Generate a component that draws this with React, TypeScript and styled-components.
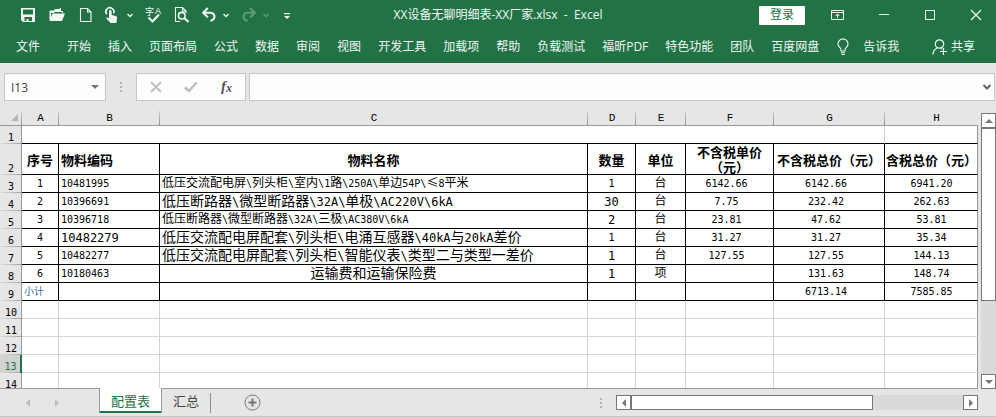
import React from "react";
import styled, { createGlobalStyle, css } from "styled-components";

const GREEN = "#217346";
const CHROME = "#e6e6e6";
const EDGE = "#999999";
const SANS = `"Noto Sans CJK SC", "Open Sans", sans-serif`;
const UI = `"Open Sans", "Noto Sans CJK SC", sans-serif`;
const MONO = `"DejaVu Sans Mono", "Noto Sans CJK SC", monospace`;

const GlobalStyle = createGlobalStyle`
  *, *::before, *::after { box-sizing: border-box; }
  html, body { margin: 0; padding: 0; }
  body { background: ${CHROME}; font-family: ${UI}; font-size: 12px; overflow: hidden; }
  button, input { font: inherit; color: inherit; margin: 0; padding: 0; border: 0; background: none; border-radius: 0; }
  button { cursor: pointer; }
  svg { display: block; overflow: visible; }
`;

const Window = styled.div`
  display: flex;
  flex-direction: column;
  height: 100vh;
  background: ${CHROME};
`;

/* ---------- title bar and ribbon ---------- */

const Ribbon = styled.header`
  flex: none;
  background: ${GREEN};
  color: #f2f7f4;
  line-height: 18px;
  white-space: nowrap;
`;

const TitleBar = styled.div`
  display: grid;
  grid-template-columns: 1fr auto 1fr;
  align-items: center;
  height: 30px;
`;

const QuickAccess = styled.div`
  display: flex;
  align-items: center;
  gap: 11px;
  padding-left: 20px;
`;

const ToolGroup = styled.div<{ $gap: number }>`
  display: flex;
  align-items: center;
  gap: ${(p) => p.$gap}px;
`;

const IconButton = styled.button<{ $dim?: boolean }>`
  display: block;
  flex: none;
  opacity: ${(p) => (p.$dim ? 0.3 : 1)};
`;

const Title = styled.h1`
  margin: 0;
  font-size: 12px;
  font-weight: 400;
  white-space: pre;
`;

const TitleRight = styled.div`
  display: flex;
  align-items: center;
  justify-content: flex-end;
  gap: 25px;
  padding-right: 12px;
`;

const LoginButton = styled.button`
  width: 46px;
  height: 19px;
  border-radius: 1px;
  background: #ffffff;
  color: ${GREEN};
  line-height: 18px;
`;

const TabRow = styled.nav`
  display: flex;
  align-items: center;
  gap: 17px;
  height: 33px;
  padding: 0 21px 0 16px;
`;

const RibbonTab = styled.button<{ $file?: boolean }>`
  flex: none;
  margin-right: ${(p) => (p.$file ? 10 : 0)}px;
`;

const IconLabel = styled.button<{ $gap: number; $end?: boolean }>`
  display: flex;
  align-items: center;
  flex: none;
  gap: ${(p) => p.$gap}px;
  margin-left: ${(p) => (p.$end ? "auto" : "0")};
`;

/* ---------- formula bar ---------- */

const FormulaBar = styled.div`
  display: flex;
  flex: none;
  align-items: center;
  padding: 10px 1px 10px 4px;
`;

const Box = styled.div`
  display: flex;
  align-items: center;
  height: 28px;
  border: 1px solid #c6c6c6;
  background: #fdfdfd;
`;

const NameBox = styled(Box)`
  width: 102px;
  padding: 0 5px 0 6px;
`;

const NameInput = styled.input`
  flex: 1;
  min-width: 0;
  color: #444444;
  outline: none;
`;

const FormulaTools = styled(Box)`
  width: 110px;
  justify-content: space-around;
  margin-right: 3px;
  padding: 0 1px;
`;

const FormulaField = styled(Box)`
  flex: 1;
  padding-right: 2px;
`;

const FormulaInput = styled.input`
  flex: 1;
  min-width: 0;
  height: 100%;
  padding: 0 6px;
  outline: none;
`;

const Grip = styled.div`
  display: flex;
  flex-direction: column;
  align-items: center;
  flex: none;
  gap: 2px;
  width: 30px;
  &::before, &::after, & > i { content: ""; width: 2px; height: 2px; background: #b4b4b4; }
`;

/* ---------- sheet ---------- */

const SheetArea = styled.main`
  display: flex;
  flex: 1;
  min-height: 0;
`;

const GridPane = styled.div`
  flex: 1;
  min-width: 0;
  overflow: hidden;
  border-bottom: 1px solid ${EDGE};
`;

const Grid = styled.table`
  width: 100%;
  table-layout: fixed;
  border-collapse: separate;
  border-spacing: 0;
  color: #000000;
  font-family: ${MONO};
  font-size: 12px;
  line-height: 15px;
  th, td { padding: 0; white-space: nowrap; }
`;

const Col = styled.col<{ $w?: number }>`
  width: ${(p) => (p.$w ? `${p.$w}px` : "auto")};
`;

const ColumnHead = styled.th`
  height: 15px;
  border-bottom: 1px solid ${EDGE};
  background: linear-gradient(#d0d0d0, #8c8c8c) right / 1px 100% no-repeat ${CHROME};
  font-family: "Liberation Mono", monospace;
  font-size: 11px;
  font-weight: 400;
  line-height: 14px;
  &:last-child { background: ${CHROME}; }
  &&:last-child { padding-left: 10px; }
`;

const Corner = styled(ColumnHead)`
  svg { margin-left: 11px; }
`;

const Row = styled.tr<{ $h: number }>`
  height: ${(p) => p.$h}px;
`;

const RowHead = styled.th<{ $active?: boolean }>`
  border-right: 1px solid ${EDGE};
  background: linear-gradient(to right, #dcdcdc, #a4a4a4) bottom / 100% 1px no-repeat ${CHROME};
  font-family: "DejaVu Sans Mono", monospace;
  font-size: 10px;
  font-weight: 400;
  line-height: 12px;
  vertical-align: bottom;
  && { padding-left: 1px; }
  ${(p) =>
    p.$active &&
    css`
      border-right: 2px solid ${GREEN};
      background-color: #d2d2d2;
      color: ${GREEN};
    `}
`;

const Cell = styled.td<{ $ruled?: boolean; $left?: boolean; $amount?: boolean; $size?: number }>`
  border-right: 1px solid ${(p) => (p.$ruled ? "#000000" : "#d4d4d4")};
  border-bottom: 1px solid ${(p) => (p.$ruled ? "#000000" : "#d4d4d4")};
  background: #ffffff;
  text-align: ${(p) => (p.$left ? "left" : "center")};
  font-size: ${(p) => p.$size ?? 12}px;
  &:last-child { border-right-color: ${EDGE}; }
  && {
    padding-left: ${(p) => (p.$left ? 2 : 0)}px;
    padding-right: ${(p) => (p.$amount ? 6 : 0)}px;
  }
  &&:last-child { padding: 0 0 0 1px; }
`;

const TitleCell = styled(Cell)`
  border-right-color: #d4d4d4;
`;

const HeadingCell = styled(Cell)`
  font-family: ${SANS};
  font-weight: 700;
  font-size: 13px;
  line-height: 15px;
  && { white-space: pre-line; }
`;

const Latin = styled.span<{ $size: number }>`
  font-size: ${(p) => p.$size}px;
  line-height: 12px;
`;

const Han = styled.span`
  font-family: ${SANS};
  line-height: 12px;
`;

const Subtotal = styled.span`
  color: #2f6f9f;
  font-family: ${SANS};
  font-size: 10px;
  line-height: 12px;
`;

/* ---------- scroll bars ---------- */

const VScroll = styled.div`
  display: flex;
  flex-direction: column;
  flex: none;
  width: 15px;
  margin: 2px 0 0 3px;
  background: #dadada;
`;

const HScroll = styled.div`
  display: flex;
  flex: 0 1 362px;
  height: 15px;
  background: #dadada;
`;

const ScrollButton = styled.button`
  display: flex;
  align-items: center;
  justify-content: center;
  flex: none;
  width: 15px;
  height: 15px;
  border: 1px solid #777777;
  background: #ffffff;
`;

const Thumb = styled.div<{ $grow: number }>`
  flex: ${(p) => p.$grow} 1 0;
  border: 1px solid #777777;
  background: #ffffff;
`;

const Track = styled.div<{ $grow: number }>`
  flex: ${(p) => p.$grow} 1 0;
`;

/* ---------- sheet tabs ---------- */

const BottomBar = styled.footer`
  display: flex;
  align-items: center;
  flex: none;
  height: 28px;
  padding-right: 18px;
  border-bottom: 1px solid #c6c6c6;
`;

const SheetNav = styled.div`
  display: flex;
  justify-content: center;
  gap: 19px;
  width: 99px;
  padding-right: 14px;
`;

const SheetTabs = styled.div`
  display: flex;
  align-items: center;
  align-self: stretch;
  flex: 1;
`;

const SheetTab = styled.button<{ $active?: boolean }>`
  position: relative;
  align-self: flex-start;
  height: 25px;
  margin-top: -1px;
  padding: 0 11px;
  color: #444444;
  font-size: 13px;
  line-height: 24px;
  ${(p) =>
    p.$active &&
    css`
      border: solid ${EDGE};
      border-width: 0 1px 0 1px;
      box-shadow: inset 0 -2px 0 ${GREEN};
      background: #ffffff;
      color: ${GREEN};
    `}
`;

const TabDivider = styled.div`
  width: 1px;
  height: 20px;
  margin-right: 33px;
  background: #8c8c8c;
`;

/* ---------- icons ---------- */

const Chevron = () => (
  <svg width="8" height="16" viewBox="0 0 8 16" fill="none" stroke="currentColor" strokeWidth="1.3">
    <path d="M1.5 7 4 9.5 6.500 7" />
  </svg>
);

const SaveIcon = () => (
  <svg width="16" height="16" viewBox="0 0 16 16">
    <path d="M1 1h14v14H3l-2-2z" fill="currentColor" />
    <path d="M3 2.500h10V7.500H3zM4.500 10h7.500v4H8.500v-2h-2v2h-2z" fill={GREEN} />
  </svg>
);

const OpenIcon = () => (
  <svg width="16" height="16" viewBox="0 0 16 16" fill="currentColor">
    <path d="M0.5 13V3.500h4.200L6 2h4l2-1.200V4h2v2h-1V5H6L4.700 6H2v7z" />
    <path d="M3.400 6.500H16L13 14H0.500z" />
  </svg>
);

const NewIcon = () => (
  <svg width="16" height="16" viewBox="0 0 16 16" fill="none" stroke="currentColor" strokeWidth="1.1">
    <path d="M2.500 1.500h7l3.500 3.500v9.500H2.500zM9.500 1.500V5H13" />
  </svg>
);

const TouchIcon = () => (
  <svg width="16" height="16" viewBox="0 0 16 16">
    <path d="M1.800 7.300A4 4 0 1 1 8.600 6.200" fill="none" stroke="currentColor" strokeWidth="1.6" />
    <path
      d="M4 4.200a1.300 1.300 0 0 1 2.600 0V8l4.200 1c.8.2 1.200.8 1.200 1.600L11.400 16H5.600L1 11.300c.6-1 1.700-.9 3 .2z"
      fill="currentColor"
    />
  </svg>
);

const SpellingIcon = () => (
  <svg width="18" height="16" viewBox="0 0 18 16" fill="currentColor">
    <text x="0" y="8" fontSize="9" fontFamily="Noto Sans CJK SC, sans-serif">字</text>
    <text x="10" y="7" fontSize="9" fontFamily="Liberation Sans, sans-serif">A</text>
    <path d="M3.500 10.500 7.500 14.500 14 7.500" fill="none" stroke="currentColor" strokeWidth="2.2" />
  </svg>
);

const PreviewIcon = () => (
  <svg width="16" height="16" viewBox="0 0 16 16" fill="none" stroke="currentColor">
    <path d="M6 14.500H1.500v-14h7L12 4v2M8.500 .5V4H12" strokeWidth="1.1" />
    <circle cx="7.800" cy="8.700" r="3.300" strokeWidth="1.6" />
    <path d="M10.200 11 14.500 15" strokeWidth="2.2" />
  </svg>
);

const UndoIcon = ({ flip }: { flip?: boolean }) => (
  <svg width="16" height="16" viewBox="0 0 16 16" fill="none" stroke="currentColor" strokeWidth="2.1">
    <g transform={flip ? "matrix(-1 0 0 1 16 0)" : undefined}>
      <path d="M2.500 5.700H10a3.900 3.900 0 0 1 1.600 7.200L9.500 14" />
      <path d="M6.800 1 2.200 5.700 6.800 10.200" />
    </g>
  </svg>
);

const CustomizeIcon = () => (
  <svg width="12" height="16" viewBox="0 0 12 16" fill="currentColor">
    <path d="M3 6h6v1.200H3zM3 9h6L6 12z" />
  </svg>
);

const RibbonOptionsIcon = () => (
  <svg width="16" height="16" viewBox="0 0 16 16" fill="none" stroke="currentColor">
    <path d="M1.500 3.500h12v9h-12zM1.500 5.500h12M7.500 11V7M5.500 9l2-2 2 2" />
  </svg>
);

const MinimizeIcon = () => (
  <svg width="16" height="16" viewBox="0 0 16 16" stroke="currentColor">
    <path d="M3 7.500h10" />
  </svg>
);

const MaximizeIcon = () => (
  <svg width="16" height="16" viewBox="0 0 16 16" fill="none" stroke="currentColor">
    <path d="M3.500 3.500h9v9h-9z" />
  </svg>
);

const CloseIcon = () => (
  <svg width="16" height="16" viewBox="0 0 16 16" stroke="currentColor" strokeWidth="1.2">
    <path d="M3 3l10 10M13 3L3 13" />
  </svg>
);

const BulbIcon = () => (
  <svg width="14" height="18" viewBox="0 0 14 18" fill="none" stroke="currentColor" strokeWidth="1.1">
    <path d="M5 13V11.500C4.600 9.700 2 8.600 2 5.900a5 5 0 0 1 10 0c0 2.700-2.600 3.800-3 5.600V13zM5 14.800h4M5.500 16.500h3" />
  </svg>
);

const ShareIcon = () => (
  <svg width="16" height="18" viewBox="0 0 16 18" fill="none" stroke="currentColor" strokeWidth="1.2">
    <circle cx="7.500" cy="6" r="4.200" />
    <path d="M1 16.500c0-3.400 1.800-5.500 4.300-6.500M9 10.500 10 11M8 13.500h7M11.500 10v7" />
  </svg>
);

const Arrow = ({ d, color = "#777777" }: { d: "up" | "down" | "left" | "right"; color?: string }) => {
  const paths = {
    up: "M5 3 9 7H1z",
    down: "M5 7 1 3h8z",
    left: "M3 5l4-4v8z",
    right: "M7 5 3 1v8z",
  };
  return (
    <svg width="10" height="10" viewBox="0 0 10 10" fill={color}>
      <path d={paths[d]} />
    </svg>
  );
};

const CancelIcon = () => (
  <svg width="16" height="16" viewBox="0 0 16 16" stroke="#bdbdbd" strokeWidth="1.8">
    <path d="M3 3l10 10M13 3L3 13" />
  </svg>
);

const EnterIcon = () => (
  <svg width="16" height="16" viewBox="0 0 16 16" fill="none" stroke="#bdbdbd" strokeWidth="2.4">
    <path d="M2 8.500 6 12 13.500 3.500" />
  </svg>
);

const FunctionIcon = () => (
  <svg width="16" height="18" viewBox="0 0 16 18" fill="#555555" fontStyle="italic" fontWeight="700">
    <text x="3" y="13" fontSize="15" fontFamily="Liberation Serif, serif">f</text>
    <text x="8" y="14" fontSize="12" fontFamily="Liberation Serif, serif">x</text>
  </svg>
);

const FieldChevron = () => (
  <svg width="10" height="10" viewBox="0 0 10 10" fill="none" stroke="#666666" strokeWidth="2">
    <path d="M1.500 3 5 6.500 8.500 3" />
  </svg>
);

const AddIcon = () => (
  <svg width="17" height="17" viewBox="0 0 17 17" fill="none" stroke="#777777">
    <circle cx="8.500" cy="8.500" r="7.500" />
    <path d="M8.500 4.500v8M4.500 8.500h8" strokeWidth="2" />
  </svg>
);

/* ---------- data ---------- */

const TABS = [
  "开始", "插入", "页面布局", "公式", "数据", "审阅", "视图", "开发工具",
  "加载项", "帮助", "负载测试", "福昕PDF", "特色功能", "团队", "百度网盘",
];

const COLUMNS: { name: string; width?: number }[] = [
  { name: "A", width: 37 },
  { name: "B", width: 101 },
  { name: "C" },
  { name: "D", width: 48 },
  { name: "E", width: 50 },
  { name: "F", width: 88 },
  { name: "G", width: 111 },
  { name: "H", width: 93 },
];

const HEADINGS = ["序号", "物料编码", "物料名称", "数量", "单位", "不含税单价\n（元）", "不含税总价（元）", "含税总价（元）"];

type Value = { text: string; large?: boolean; left?: boolean };
const s = (text: string): Value => ({ text });
const left = (text: string): Value => ({ text, left: true });
const big = (text: string): Value => ({ text, large: true });
const bigLeft = (text: string): Value => ({ text, large: true, left: true });

const ITEMS: Value[][] = [
  [s("1"), left("10481995"), left("低压交流配电屏\\列头柜\\室内\\1路\\250A\\单边54P\\≤8平米"), s("1"), s("台"), s("6142.66"), s("6142.66"), s("6941.20")],
  [s("2"), left("10396691"), bigLeft("低压断路器\\微型断路器\\32A\\单极\\AC220V\\6kA"), big("30"), s("台"), s("7.75"), s("232.42"), s("262.63")],
  [s("3"), left("10396718"), left("低压断路器\\微型断路器\\32A\\三极\\AC380V\\6kA"), big("2"), s("台"), s("23.81"), s("47.62"), s("53.81")],
  [s("4"), bigLeft("10482279"), bigLeft("低压交流配电屏配套\\列头柜\\电涌互感器\\40kA与20kA差价"), s("1"), s("台"), s("31.27"), s("31.27"), s("35.34")],
  [s("5"), left("10482277"), bigLeft("低压交流配电屏配套\\列头柜\\智能仪表\\类型二与类型一差价"), big("1"), s("台"), s("127.55"), s("127.55"), s("144.13")],
  [s("6"), left("10180463"), big("运输费和运输保险费"), big("1"), s("项"), s(""), s("131.63"), s("148.74")],
];

const TOTALS = ["", "", "", "", "", "6713.14", "7585.85"];
const EMPTY_ROWS = [10, 11, 12, 13, 14];

/* Latin runs are set in half-width letters beside full-width Chinese ones. */
const Mixed = ({ text, large }: { text: string; large?: boolean }) => (
  <>
    {text.split(/([\x20-\x7e]+)/).filter(Boolean).map((run, i) =>
      /^[\x20-\x7e]/.test(run) ? <Latin key={i} $size={large ? 12 : 10}>{run}</Latin> : <Han key={i}>{run}</Han>
    )}
  </>
);

export default function App() {
  return (
    <Window>
      <GlobalStyle />
      <Ribbon>
        <TitleBar>
          <QuickAccess>
            <ToolGroup $gap={13}>
              <IconButton aria-label="保存"><SaveIcon /></IconButton>
              <IconButton aria-label="打开"><OpenIcon /></IconButton>
              <IconButton aria-label="新建"><NewIcon /></IconButton>
            </ToolGroup>
            <ToolGroup $gap={5}>
              <IconButton aria-label="触摸模式"><TouchIcon /></IconButton>
              <IconButton aria-label="触摸模式选项"><Chevron /></IconButton>
            </ToolGroup>
            <ToolGroup $gap={11}>
              <IconButton aria-label="拼写检查"><SpellingIcon /></IconButton>
              <IconButton aria-label="打印预览"><PreviewIcon /></IconButton>
            </ToolGroup>
            <ToolGroup $gap={5}>
              <IconButton aria-label="撤消"><UndoIcon /></IconButton>
              <IconButton aria-label="撤消选项"><Chevron /></IconButton>
            </ToolGroup>
            <ToolGroup $gap={5}>
              <IconButton aria-label="恢复" $dim><UndoIcon flip /></IconButton>
              <IconButton aria-label="恢复选项" $dim><Chevron /></IconButton>
            </ToolGroup>
            <IconButton aria-label="自定义快速访问工具栏"><CustomizeIcon /></IconButton>
          </QuickAccess>
          <Title>{"XX设备无聊明细表-XX厂家.xlsx  -  Excel"}</Title>
          <TitleRight>
            <LoginButton>登录</LoginButton>
            <ToolGroup $gap={30}>
              <IconButton aria-label="功能区显示选项"><RibbonOptionsIcon /></IconButton>
              <IconButton aria-label="最小化"><MinimizeIcon /></IconButton>
              <IconButton aria-label="最大化"><MaximizeIcon /></IconButton>
              <IconButton aria-label="关闭"><CloseIcon /></IconButton>
            </ToolGroup>
          </TitleRight>
        </TitleBar>
        <TabRow>
          <RibbonTab $file>文件</RibbonTab>
          {TABS.map((tab) => <RibbonTab key={tab}>{tab}</RibbonTab>)}
          <IconLabel $gap={13}><BulbIcon />告诉我</IconLabel>
          <IconLabel $gap={3} $end><ShareIcon />共享</IconLabel>
        </TabRow>
      </Ribbon>

      <FormulaBar>
        <NameBox>
          <NameInput aria-label="名称框" defaultValue="I13" />
          <button aria-label="名称列表"><Arrow d="down" /></button>
        </NameBox>
        <Grip><i /></Grip>
        <FormulaTools>
          <button aria-label="取消"><CancelIcon /></button>
          <button aria-label="输入"><EnterIcon /></button>
          <button aria-label="插入函数"><FunctionIcon /></button>
        </FormulaTools>
        <FormulaField>
          <FormulaInput aria-label="编辑栏" />
          <button aria-label="展开编辑栏"><FieldChevron /></button>
        </FormulaField>
      </FormulaBar>

      <SheetArea>
        <GridPane>
          <Grid>
            <colgroup>
              <Col $w={22} />
              {COLUMNS.map((c) => <Col key={c.name} $w={c.width} />)}
            </colgroup>
            <thead>
              <tr>
                <Corner aria-label="全选">
                  <svg width="8" height="8" viewBox="0 0 8 8" fill="#b4b4b4"><path d="M7 0v7H0z" /></svg>
                </Corner>
                {COLUMNS.map((c) => <ColumnHead key={c.name} scope="col">{c.name}</ColumnHead>)}
              </tr>
            </thead>
            <tbody>
              <Row $h={18}>
                <RowHead scope="row">1</RowHead>
                <TitleCell $ruled colSpan={7} />
                <Cell $ruled />
              </Row>
              <Row $h={31}>
                <RowHead scope="row">2</RowHead>
                {HEADINGS.map((h, i) => <HeadingCell key={h} $ruled $left={i === 1}>{h}</HeadingCell>)}
              </Row>
              {ITEMS.map((row, r) => (
                <Row key={r} $h={18}>
                  <RowHead scope="row">{r + 3}</RowHead>
                  {row.map((v, c) => (
                    <Cell key={c} $ruled $left={v.left} $amount={c > 4} $size={v.large ? 14 : 12}>
                      <Mixed text={v.text} large={v.large} />
                    </Cell>
                  ))}
                </Row>
              ))}
              <Row $h={18}>
                <RowHead scope="row">9</RowHead>
                <Cell $ruled $left><Subtotal>小计</Subtotal></Cell>
                {TOTALS.map((t, i) => <Cell key={i} $ruled $amount={i > 3}><Mixed text={t} /></Cell>)}
              </Row>
              {EMPTY_ROWS.map((n) => (
                <Row key={n} $h={18}>
                  <RowHead scope="row" $active={n === 13}>{n}</RowHead>
                  {COLUMNS.map((c) => <Cell key={c.name} />)}
                </Row>
              ))}
            </tbody>
          </Grid>
        </GridPane>
        <VScroll>
          <ScrollButton aria-label="向上滚动"><Arrow d="up" /></ScrollButton>
          <Thumb $grow={7} />
          <Track $grow={3} />
          <ScrollButton aria-label="向下滚动"><Arrow d="down" /></ScrollButton>
        </VScroll>
      </SheetArea>

      <BottomBar>
        <SheetNav>
          <button aria-label="上一张工作表"><Arrow d="left" color="#bbbbbb" /></button>
          <button aria-label="下一张工作表"><Arrow d="right" color="#bbbbbb" /></button>
        </SheetNav>
        <SheetTabs>
          <SheetTab $active>配置表</SheetTab>
          <SheetTab>汇总</SheetTab>
          <TabDivider />
          <button aria-label="新工作表"><AddIcon /></button>
        </SheetTabs>
        <Grip><i /></Grip>
        <HScroll>
          <ScrollButton aria-label="向左滚动"><Arrow d="left" /></ScrollButton>
          <Thumb $grow={8} />
          <Track $grow={3} />
          <ScrollButton aria-label="向右滚动"><Arrow d="right" /></ScrollButton>
        </HScroll>
      </BottomBar>
    </Window>
  );
}
